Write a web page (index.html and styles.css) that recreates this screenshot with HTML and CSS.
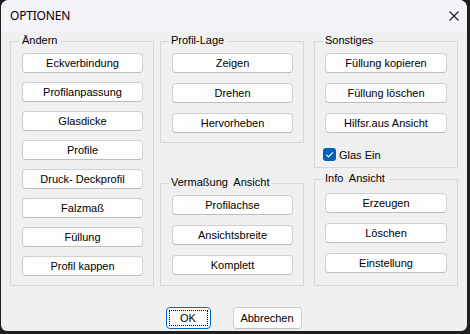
FILE: index.html
```html
<!DOCTYPE html>
<html lang="de">
<head>
<meta charset="utf-8">
<title>OPTIONEN</title>
<link rel="stylesheet" href="styles.css">
</head>
<body>
<div class="window">
  <div class="titlebar">
    <span class="title">OPTIONEN</span>
    <svg class="close" width="10" height="10" viewBox="0 0 10 10"><path d="M0.5 0.5 L9.5 9.5 M9.5 0.5 L0.5 9.5" stroke="#1a1a1a" stroke-width="1.1" fill="none"/></svg>
  </div>
  <div class="columns">
    <div class="col">
      <div class="group g-aendern">
        <span class="legend">Ändern</span>
        <button class="btn">Eckverbindung</button>
        <button class="btn">Profilanpassung</button>
        <button class="btn">Glasdicke</button>
        <button class="btn">Profile</button>
        <button class="btn">Druck- Deckprofil</button>
        <button class="btn">Falzmaß</button>
        <button class="btn">Füllung</button>
        <button class="btn">Profil kappen</button>
      </div>
    </div>
    <div class="col col-mid">
      <div class="group g-lage">
        <span class="legend">Profil-Lage</span>
        <button class="btn">Zeigen</button>
        <button class="btn">Drehen</button>
        <button class="btn">Hervorheben</button>
      </div>
      <div class="group g-verm">
        <span class="legend">Vermaßung  Ansicht</span>
        <button class="btn">Profilachse</button>
        <button class="btn">Ansichtsbreite</button>
        <button class="btn">Komplett</button>
      </div>
    </div>
    <div class="col col-right">
      <div class="group g-sonst">
        <span class="legend">Sonstiges</span>
        <button class="btn wide">Füllung kopieren</button>
        <button class="btn wide">Füllung löschen</button>
        <button class="btn wide">Hilfsr.aus Ansicht</button>
        <label class="check">
          <span class="box"><svg width="13" height="13" viewBox="0 0 13 13"><path d="M3.2 6.6 L5.5 8.9 L9.9 4.3" stroke="#fff" stroke-width="1.1" fill="none"/></svg></span>
          <span>Glas Ein</span>
        </label>
      </div>
      <div class="group g-info">
        <span class="legend">Info  Ansicht</span>
        <button class="btn wide">Erzeugen</button>
        <button class="btn wide">Löschen</button>
        <button class="btn wide">Einstellung</button>
      </div>
    </div>
  </div>
  <div class="footer">
    <button class="btn dlg ok">OK</button>
    <button class="btn dlg cancel">Abbrechen</button>
  </div>
</div>
</body>
</html>
```
FILE: styles.css
```css
html, body {
  margin: 0;
  padding: 0;
}
body {
  width: 470px;
  height: 334px;
  background: #1f1f1f;
  overflow: hidden;
  font-family: "Liberation Sans", Arial, sans-serif;
  font-size: 11px;
  color: #000;
}
.window {
  margin-left: 1px;
  width: 466px;
  height: 331px;
  background: #f0f0f0;
  border-radius: 8px 8px 6px 6px;
  overflow: hidden;
}
.titlebar {
  height: 31px;
  background: #f3f3f8;
  display: flex;
  align-items: center;
  padding-left: 9px;
}
.title {
  font-family: "Noto Sans", "Open Sans", sans-serif;
  font-size: 12px;
  letter-spacing: -0.2px;
}
.close {
  margin-left: auto;
  margin-right: 8px;
  display: block;
}
.columns {
  display: flex;
  align-items: flex-start;
  margin-top: 10px;
  padding-left: 9px;
  height: 245px;
}
.col {
  width: 144px;
  height: 245px;
  display: flex;
  flex-direction: column;
}
.col-mid {
  margin-left: 6px;
  margin-right: 10px;
  gap: 40px;
}
.col-right {
  gap: 11px;
}
.group {
  position: relative;
  box-sizing: border-box;
  border: 1px solid #d7d7d7;
  display: flex;
  flex-direction: column;
  align-items: flex-start;
}
.legend {
  position: absolute;
  top: -8px;
  left: 9px;
  line-height: 13px;
  padding: 0 4px 0 2px;
  background: #f0f0f0;
  white-space: pre;
}
.col-mid .legend, .col-right .legend {
  left: 8px;
}
.g-aendern {
  height: 245px;
  padding: 11px 10px 9px 11px;
  gap: 9px;
}
.g-lage {
  height: 102px;
  padding: 11px 10px 9px 11px;
  gap: 10px;
}
.g-verm {
  height: 103px;
  padding: 11px 10px 10px 11px;
  gap: 10px;
}
.g-sonst {
  height: 127px;
  padding: 11px 10px 6px 10px;
  gap: 10px;
}
.g-info {
  height: 107px;
  padding: 13px 10px 12px 10px;
  gap: 10px;
}
.btn {
  box-sizing: border-box;
  width: 121px;
  height: 20px;
  margin: 0;
  padding: 0;
  background: #fdfdfd;
  border: 1px solid #d0d0d0;
  border-bottom-color: #bdbdbd;
  border-radius: 4px;
  font-family: "Liberation Sans", Arial, sans-serif;
  font-size: 11px;
  color: #000;
  text-align: center;
  line-height: 18px;
}
.btn.wide {
  width: 122px;
}
.check {
  display: flex;
  align-items: center;
  gap: 3px;
  margin-top: 5px;
  margin-left: -2px;
  height: 13px;
}
.box {
  width: 13px;
  height: 13px;
  box-sizing: border-box;
  background: #005fb8;
  border-radius: 3px;
  display: block;
}
.box svg {
  display: block;
}
.footer {
  display: flex;
  justify-content: center;
  gap: 22px;
  margin-top: 21px;
  padding-right: 1px;
}
.dlg {
  height: 22px;
  line-height: 20px;
}
.ok {
  width: 45px;
  border: 1px solid #0067c0;
  outline: 1px dotted #000;
  outline-offset: -4px;
}
.cancel {
  width: 69px;
}
```
